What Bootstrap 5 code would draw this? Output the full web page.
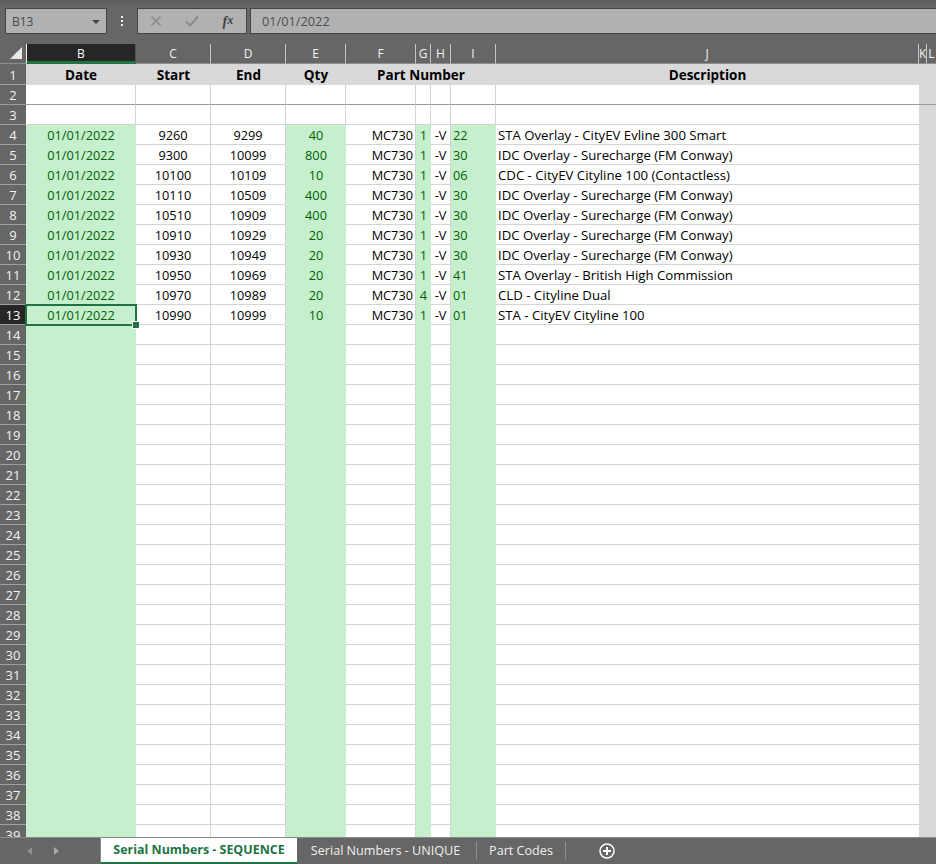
<!DOCTYPE html>
<html lang="en">
<head>
<meta charset="utf-8">
<title>Serial Numbers</title>
<link href="https://cdn.jsdelivr.net/npm/bootstrap@5.3.0/dist/css/bootstrap.min.css" rel="stylesheet">
<style>
html,body{margin:0;height:864px;overflow:hidden;background:#666}
body{font-family:"Open Sans","Liberation Sans",sans-serif;font-size:12px;color:#000}
.xl-app{width:936px;height:864px;overflow:hidden;background:#666}
.xl-top{height:44px;background:linear-gradient(#5c5c5c,#666 6px);padding:8px 0 0 5px}
.xl-name{width:102px;height:26px;background:#b1b1b1;border:1px solid #444;padding:1px 6px 0;color:#4a4a4a;font-size:12px}
.xl-caret{width:0;height:0;border-left:4px solid transparent;border-right:4px solid transparent;border-top:4px solid #444}
.xl-dots{width:30px}
.xl-dots svg{display:block}
.xl-fx{width:110px;height:26px;background:#b1b1b1;border:1px solid #444}
.xl-fx-i{width:36px}
.xl-fx-t{font-family:"Liberation Serif",serif;font-style:italic;font-weight:700;font-size:14px;color:#444}
.xl-bar{margin-left:3px;flex:1;height:26px;background:#b1b1b1;border:1px solid #444;border-right:0;padding:1px 11px 0;color:#4d4d4d;font-size:12.75px}
.xl-sheet{height:793px;overflow:hidden}
table.xl-grid{table-layout:fixed;border-collapse:separate;border-spacing:0;width:936px}
.xl-grid th,.xl-grid td{padding:1px 0 0;height:20px;line-height:18px;white-space:nowrap;overflow:hidden;box-sizing:border-box;font-weight:400;font-size:12.75px}
.xl-grid td{background:#fff;border-right:1px solid #d4d4d4;border-bottom:1px solid #d4d4d4;text-align:center}
.xl-grid thead th{background:#666;color:#f2f2f2;text-align:center;border-bottom:1px solid #8f8f8f;border-right:1px solid #c4c4c4;font-size:12px;height:20px}
.xl-grid thead th.xl-lastc{border-right:0}
.xl-grid thead th.xl-corner{border-right:0;position:relative}
.xl-tri{position:absolute;right:4px;bottom:4px;width:0;height:0;border-left:12px solid transparent;border-bottom:12px solid #e8e8e8}
.xl-grid thead th.xl-sel{background:#262626;color:#fff;box-shadow:inset 0 -2px 0 #217346;border-bottom-color:#217346;border-right-color:#555;border-left:1px solid #f0f0f0}
.xl-grid th.xl-rh{background:#666;color:#f2f2f2;text-align:center;border-bottom:1px solid #a0a0a0;border-right:0;font-size:13px}
.xl-grid th.xl-rh.xl-sel{background:#262626;color:#fff}
.xl-grid tr.xl-hd td{height:21px;padding:0;background:#d9d9d9;border-right:0;border-bottom:0;font-weight:700;font-size:13.5px;line-height:20px;overflow:visible}
.xl-grid tr.xl-hd th{height:21px}
.xl-grid td.xl-g{background:#c6efce;color:#006100;border-right:0;border-bottom:0;padding:0;line-height:20px}
.xl-grid td.xl-e{background:#d9d9d9;border-right:0;border-bottom:0}
.xl-grid td.xl-r{text-align:right;padding-right:2px}
.xl-grid td.xl-l{text-align:left;padding-left:2px}
.xl-grid td.xl-d{font-size:13.2px;border-right:0}
.xl-grid tr.xl-fr td:not(.xl-g){border-bottom-color:#9b9b9b}
.xl-grid tr.xl-fr td.xl-e{border-bottom:1px solid #9b9b9b}
.xl-grid tr.xl-fr th.xl-rh{border-bottom-color:#9b9b9b}
.xl-grid td.xl-cur{position:relative;overflow:visible;box-shadow:inset 0 0 0 1px #fff;outline:2px solid #217346;outline-offset:-1px}
.xl-grip{position:absolute;right:-3px;bottom:-3px;width:6px;height:6px;background:#217346;border:1px solid #fff;box-sizing:content-box;margin:-1px}
.xl-tabs{height:27px;background:#666;border-top:1px solid #8a8a8a;font-size:12.6px;color:#f0f0f0}
.xl-nav{width:100px;padding-left:27px;gap:22px}
.xl-arr-l,.xl-arr-r{width:0;height:0;border-top:4px solid transparent;border-bottom:4px solid transparent}
.xl-arr-l{border-right:5px solid #909090}
.xl-arr-r{border-left:5px solid #a8a8a8}
.xl-tab-on{width:197px;height:26px;background:#fff;color:#217346;font-weight:700;font-size:12.45px;border-bottom:2px solid #217346;line-height:24px;text-align:center;border-left:1px solid #8a8a8a}
.xl-tab{height:18px;line-height:18px;border-right:1px solid #8f8f8f;text-align:center}
.xl-tab-1{width:180px;padding-right:2px}
.xl-tab-2{width:89px}
.xl-plus{margin-left:32px;display:block}
</style>
</head>
<body>
<div class="xl-app d-flex flex-column">
  <div class="xl-top d-flex align-items-start">
    <div class="xl-name d-flex align-items-center justify-content-between"><span>B13</span><span class="xl-caret"></span></div>
    <div class="xl-dots d-flex justify-content-center align-self-stretch pt-2">
      <svg width="3" height="12" viewBox="0 0 3 12"><rect y="0" width="2" height="2" fill="#eee"/><rect y="4" width="2" height="2" fill="#eee"/><rect y="8" width="2" height="2" fill="#eee"/></svg>
    </div>
    <div class="xl-fx d-flex align-items-center">
      <span class="xl-fx-i d-flex justify-content-center"><svg width="12" height="12" viewBox="0 0 12 12"><path d="M1.5 1.5 10.5 10.5M10.5 1.5 1.5 10.5" stroke="#8a8a8a" stroke-width="1.6" fill="none"/></svg></span>
      <span class="xl-fx-i d-flex justify-content-center"><svg width="14" height="12" viewBox="0 0 14 12"><path d="M1 6.5 5 10.5 13 1.5" stroke="#8a8a8a" stroke-width="2" fill="none"/></svg></span>
      <span class="xl-fx-i d-flex justify-content-center xl-fx-t">f<small>x</small></span>
    </div>
    <div class="xl-bar d-flex align-items-center">01/01/2022</div>
  </div>
  <div class="xl-sheet">
    <table class="xl-grid">
      <colgroup><col style="width:26px"><col style="width:110px"><col style="width:75px"><col style="width:75px"><col style="width:60px"><col style="width:70px"><col style="width:15px"><col style="width:20px"><col style="width:45px"><col style="width:423px"><col style="width:8px"><col style="width:9px"></colgroup>
      <thead><tr><th class="xl-corner"><span class="xl-tri"></span></th><th class="xl-sel">B</th><th>C</th><th>D</th><th>E</th><th>F</th><th>G</th><th>H</th><th>I</th><th>J</th><th>K</th><th class="xl-lastc">L</th></tr></thead>
      <tbody id="xl-body"></tbody>
    </table>
  </div>
  <div class="xl-tabs d-flex align-items-start">
    <div class="xl-nav d-flex align-items-center align-self-stretch"><span class="xl-arr-l"></span><span class="xl-arr-r"></span></div>
    <div class="xl-tab-on">Serial Numbers - SEQUENCE</div>
    <div class="xl-tab xl-tab-1 mt-1">Serial Numbers - UNIQUE</div>
    <div class="xl-tab xl-tab-2 mt-1">Part Codes</div>
    <svg class="xl-plus mt-1" width="18" height="18" viewBox="0 0 18 18"><circle cx="9" cy="9" r="7" stroke="#fff" stroke-width="1.5" fill="none"/><path d="M5 9H13M9 5V13" stroke="#fff" stroke-width="2"/></svg>
  </div>
</div>
<script>
var data=[
["9260","9299","40","1","22","STA Overlay - CityEV Evline 300 Smart"],
["9300","10099","800","1","30","IDC Overlay - Surecharge (FM Conway)"],
["10100","10109","10","1","06","CDC - CityEV Cityline 100 (Contactless)"],
["10110","10509","400","1","30","IDC Overlay - Surecharge (FM Conway)"],
["10510","10909","400","1","30","IDC Overlay - Surecharge (FM Conway)"],
["10910","10929","20","1","30","IDC Overlay - Surecharge (FM Conway)"],
["10930","10949","20","1","30","IDC Overlay - Surecharge (FM Conway)"],
["10950","10969","20","1","41","STA Overlay - British High Commission"],
["10970","10989","20","4","01","CLD - Cityline Dual"],
["10990","10999","10","1","01","STA - CityEV Cityline 100"]];
var h='<tr class="xl-hd"><th class="xl-rh" scope="row">1</th><td>Date</td><td>Start</td><td>End</td><td>Qty</td><td colspan="4">Part Number</td><td>Description</td><td colspan="2"></td></tr>';
for(var r=2;r<=39;r++){
  var d=r>=4&&r<=13?data[r-4]:null,cur=r===13;
  h+='<tr'+(r===2?' class="xl-fr"':'')+'><th class="xl-rh'+(cur?' xl-sel':'')+'" scope="row">'+r+'</th>';
  var g=r>=4;
  h+='<td class="'+(g?'xl-g':'')+(cur?' xl-cur':'')+'">'+(d?'01/01/2022':'')+(cur?'<span class="xl-grip"></span>':'')+'</td>';
  h+='<td>'+(d?d[0]:'')+'</td><td>'+(d?d[1]:'')+'</td>';
  h+='<td class="'+(g?'xl-g':'')+'">'+(d?d[2]:'')+'</td>';
  h+='<td class="xl-r">'+(d?'MC730':'')+'</td>';
  h+='<td class="'+(g?'xl-g':'')+'">'+(d?d[3]:'')+'</td>';
  h+='<td>'+(d?'-V':'')+'</td>';
  h+='<td class="xl-l'+(g?' xl-g':'')+'">'+(d?d[4]:'')+'</td>';
  h+='<td class="xl-l xl-d">'+(d?d[5]:'')+'</td>';
  h+='<td class="xl-e" colspan="2"></td></tr>';
}
document.getElementById('xl-body').innerHTML=h;
</script>
</body>
</html>
